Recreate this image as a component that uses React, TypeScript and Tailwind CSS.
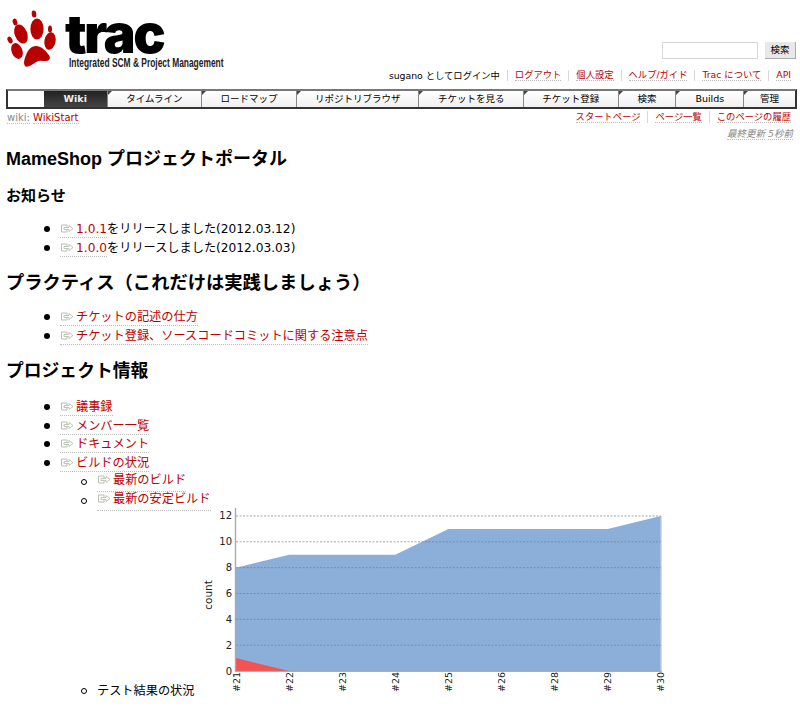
import type { ReactNode } from "react";

const bodyFont = "font-['DejaVu_Sans','Noto_Sans_CJK_JP',sans-serif]";
const headingFont = "font-['Liberation_Sans','Noto_Sans_CJK_JP',sans-serif]";

const metaLinks = ["ログアウト", "個人設定", "ヘルプ/ガイド", "Trac について", "API"];
const contextLinks = ["スタートページ", "ページ一覧", "このページの履歴"];
const navTabs = [
  { label: "タイムライン", width: "w-[95px]" },
  { label: "ロードマップ", width: "w-[95px]" },
  { label: "リポジトリブラウザ", width: "w-[123px]" },
  { label: "チケットを見る", width: "w-[105px]" },
  { label: "チケット登録", width: "w-[95px]" },
  { label: "検索", width: "w-[58px]" },
  { label: "Builds", width: "w-[68px]" },
  { label: "管理", width: "w-[52px]" },
];

const chartTicks = [0, 2, 4, 6, 8, 10, 12];
const builds = ["#21", "#22", "#23", "#24", "#25", "#26", "#28", "#29", "#30"];
const passed = [8, 9, 9, 9, 11, 11, 11, 11, 12];

function PawLogo() {
  return (
    <svg width="54" height="62" viewBox="6 8 54 62" className="shrink-0">
      <g fill="#b80000">
        <ellipse cx="10" cy="40" rx="2.3" ry="3.6" transform="rotate(-25 10 40)" />
        <ellipse cx="15" cy="22" rx="2.3" ry="3.4" transform="rotate(-15 15 22)" />
        <ellipse cx="34" cy="14" rx="2.3" ry="3.6" transform="rotate(-8 34 14)" />
        <ellipse cx="50" cy="29" rx="2" ry="3.6" />
        <ellipse cx="21" cy="34" rx="6.2" ry="10" transform="rotate(-22 21 34)" />
        <ellipse cx="37" cy="29" rx="6.6" ry="10.5" />
        <ellipse cx="50" cy="41" rx="5.6" ry="8.8" transform="rotate(10 50 41)" />
        <ellipse cx="17" cy="51" rx="5.4" ry="8.2" transform="rotate(-22 17 51)" />
        <path d="M36 46 C41 46 45 50 48 54 C51 57 50.500 61 46 61 C42 61 40 60 36 62 C32 65 27 68 25 66 C23 63 24.500 59 26 55 C28 50 31 46 36 46 Z" />
      </g>
    </svg>
  );
}

function ExternalIcon() {
  return (
    <svg width="15" height="9" viewBox="0 0 15 9" className="inline-block mr-px align-[0px]">
      <path d="M7 3V1H1.500V8H7V6" fill="none" stroke="#b9bfb2" strokeWidth="1" />
      <path d="M4 3.500H9V1.500L13 4.500L9 7.500V5.500H4Z" fill="#fff" stroke="#b0bba6" strokeWidth="0.8" />
    </svg>
  );
}

function WikiLink({ children, external = true }: { children: ReactNode; external?: boolean }) {
  return (
    <a className="text-[#b00] border-b border-dotted border-[#bbb] pb-px">
      {external && <ExternalIcon />}
      {children}
    </a>
  );
}

function Item({ children }: { children: ReactNode }) {
  return (
    <li className="flex items-center h-[18.5px]">
      <span className="w-[6px] h-[6px] rounded-full bg-black mr-[10px] shrink-0" />
      <span className="whitespace-nowrap">{children}</span>
    </li>
  );
}

function SubBullet() {
  return <span className="w-[6px] h-[6px] rounded-full border border-black mr-[10px] shrink-0" />;
}

function BuildChart() {
  const left = 36;
  const step = 53.1;
  const zero = 167;
  const unit = 12.92;
  const points = passed.map((v, i) => `${left + i * step},${zero - v * unit}`).join(" ");
  return (
    <svg width="470" height="190" viewBox="0 0 470 190" className="block shrink-0">
      <polygon
        points={`${left},${zero} ${points} ${left + 8 * step},${zero}`}
        fill="#8cafd9"
      />
      <polygon
        points={`${left},${zero} ${left},${zero - unit} ${left + step},${zero}`}
        fill="#f45353"
      />
      {chartTicks.map((t) => (
        <g key={t}>
          {t > 0 && (
            <line
              x1={left}
              x2={left + 8 * step}
              y1={zero - t * unit}
              y2={zero - t * unit}
              stroke="#6f7f8f"
              strokeWidth="0.7"
              strokeDasharray="2 1.500"
            />
          )}
          <text x={left - 4} y={zero - t * unit + 3.500} textAnchor="end" fontSize="10" fill="#222">
            {t}
          </text>
        </g>
      ))}
      <line x1={left - 0.500} x2={left - 0.500} y1="4" y2={zero + 0.500} stroke="#aaa" strokeWidth="1.400" />
      <line x1={left - 1} x2={left + 8 * step + 1} y1={zero + 0.300} y2={zero + 0.300} stroke="#999" strokeWidth="1" />
      <line x1={left + 8 * step + 0.500} x2={left + 8 * step + 0.500} y1={zero - 12 * unit} y2={zero} stroke="#c8d6e8" strokeWidth="1" />
      {builds.map((b, i) => (
        <text
          key={b}
          transform={`translate(${left + i * step + 3.500},${zero + 21}) rotate(-90)`}
          fontSize="9.500"
          fill="#222"
        >
          {b}
        </text>
      ))}
      <text transform="translate(12,91) rotate(-90)" textAnchor="middle" fontSize="10.500" fill="#222">
        count
      </text>
    </svg>
  );
}

export default function App() {
  return (
    <div className={`${bodyFont} w-[800px] h-[713px] overflow-hidden bg-white text-black text-[12.2px]`}>
      <header className="flex justify-between h-[70px] pt-2 pl-[6px] pr-1">
        <div className="flex">
          <PawLogo />
          <div className="ml-[5px] -mt-[1px]">
            <div className="font-['Inter',sans-serif] font-black text-[54px] leading-[54px] tracking-[-2.5px] h-[49px] w-[110px] text-black">
              trac
            </div>
            <div className="font-['Liberation_Sans',sans-serif] font-bold text-[12px] leading-[14px] ml-1 whitespace-nowrap origin-left scale-x-[0.7] text-[#222] w-[230px]">
              Integrated SCM &amp; Project Management
            </div>
          </div>
        </div>
        <div className="flex items-center gap-[7px] h-[17px] mt-[34px]">
          <div className="w-[96px] h-[17px] border border-[#d8d8d8] bg-white" />
          <button className="w-[31px] h-[17px] bg-[#e8e8e8] border-b border-r border-[#aaa] text-[9.5px] leading-none text-black">
            検索
          </button>
        </div>
      </header>

      <div className="flex justify-end items-center h-[11px] text-[9.3px] leading-none pr-[9px] whitespace-nowrap">
        <span className="pr-[7px]">sugano としてログイン中</span>
        {metaLinks.map((l) => (
          <span key={l} className="border-l border-[#d7d7d7] pl-[7px] pr-[7px] last:pr-0 h-[11px]">
            <a className="text-[#b00] border-b border-dotted border-[#bbb]">{l}</a>
          </span>
        ))}
      </div>

      <nav className="mt-[8px] ml-[6px] mr-[3px] flex h-[20px] border-2 border-[#333] border-t-[#777] bg-white text-[9.5px]">
        <div className="w-[36px]" />
        <div className="w-[63px] bg-[linear-gradient(#222,#444)] text-[#eee] font-bold flex items-center justify-center">
          Wiki
        </div>
        {navTabs.map((tab) => (
          <div
            key={tab.label}
            className={`${tab.width} relative flex items-center justify-center border-l border-[#888] bg-[linear-gradient(#fff,#f0f0f0)] whitespace-nowrap`}
          >
            <span className="absolute left-0 top-0 w-0 h-0 border-t-[4px] border-r-[4px] border-t-[#444] border-r-transparent" />
            {tab.label}
          </div>
        ))}
      </nav>

      <div className="flex justify-between h-[14px] mt-[2px] text-[9.3px] leading-[14px] px-[7px] pr-[9px]">
        <div className="whitespace-nowrap text-[10px]">
          <span className="text-[#888] border-b border-dotted border-[#bbb]">wiki:</span>{" "}
          <a className="text-[#b00] border-b border-dotted border-[#bbb]">WikiStart</a>
        </div>
        <div className="flex whitespace-nowrap">
          {contextLinks.map((l) => (
            <span key={l} className="border-l border-[#d7d7d7] first:border-l-0 pl-[7px] pr-[7px] last:pr-0 h-[12px] leading-[12px]">
              <a className="text-[#b00] border-b border-dotted border-[#bbb]">{l}</a>
            </span>
          ))}
        </div>
      </div>

      <p className="text-right italic text-[9.5px] leading-[12px] mt-[3px] pr-[7px] text-[#888]">
        <span className="border-b border-dotted border-[#bbb]">最終更新</span>{" "}
        <span className="border-b border-dotted border-[#bbb]">5秒前</span>
      </p>

      <main className="px-[6px]">
        <h1 className={`${headingFont} font-bold text-[18px] leading-[22px] mt-[8px]`}>MameShop プロジェクトポータル</h1>
        <h2 className="font-bold text-[15px] leading-[20px] mt-[16px]">お知らせ</h2>
        <ul className="pl-[38px] mt-[14px]">
          <Item>
            <WikiLink>1.0.1</WikiLink>をリリースしました(2012.03.12)
          </Item>
          <Item>
            <WikiLink>1.0.0</WikiLink>をリリースしました(2012.03.03)
          </Item>
        </ul>
        <h2 className="font-bold text-[18.3px] leading-[24px] mt-[14px] whitespace-nowrap">
          プラクティス（これだけは実践しましょう）
        </h2>
        <ul className="pl-[38px] mt-[13px]">
          <Item>
            <WikiLink>チケットの記述の仕方</WikiLink>
          </Item>
          <Item>
            <WikiLink>チケット登録、ソースコードコミットに関する注意点</WikiLink>
          </Item>
        </ul>
        <h2 className="font-bold text-[17.8px] leading-[24px] mt-[14px]">プロジェクト情報</h2>
        <ul className="pl-[38px] mt-[15px]">
          <Item>
            <WikiLink>議事録</WikiLink>
          </Item>
          <Item>
            <WikiLink>メンバー一覧</WikiLink>
          </Item>
          <Item>
            <WikiLink>ドキュメント</WikiLink>
          </Item>
          <Item>
            <WikiLink>ビルドの状況</WikiLink>
          </Item>
          <li className="pl-[37px]">
            <ul>
              <li className="flex items-center h-[19px]">
                <SubBullet />
                <WikiLink>最新のビルド</WikiLink>
              </li>
              <li className="flex items-center h-[19px]">
                <SubBullet />
                <WikiLink>最新の安定ビルド</WikiLink>
              </li>
              <li className="flex items-end h-[190px] -mt-[6px]">
                <span className="flex items-center h-[18px] -mb-[6px] whitespace-nowrap">
                  <SubBullet />
                  テスト結果の状況
                </span>
                <span className="ml-[5px]">
                  <BuildChart />
                </span>
              </li>
            </ul>
          </li>
        </ul>
      </main>
    </div>
  );
}
